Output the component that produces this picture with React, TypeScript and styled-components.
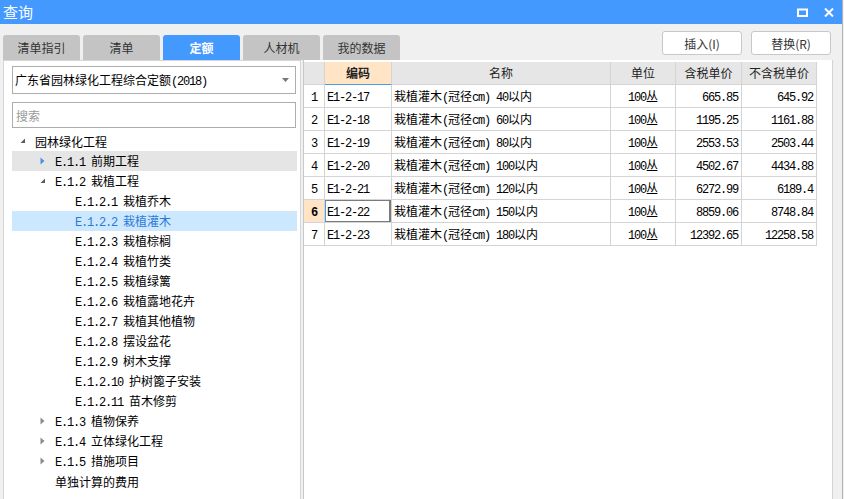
import React from "react";
import styled, { createGlobalStyle } from "styled-components";

const Global = createGlobalStyle`
  html, body { margin: 0; padding: 0; background: #f0f0f0; overflow: hidden; }
  body { font-family: "Noto Sans CJK SC", "Noto Sans", sans-serif; font-size: 12px; color: #000; }
  * { box-sizing: border-box; }
`;

const Window = styled.div`
  width: 843px;
  height: 499px;
  display: flex;
  flex-direction: column;
  background: #f0f0f0;
  border-right: 1px solid #b4b4b4;
`;

const TitleBar = styled.div`
  height: 24px;
  flex: none;
  background: #4499ff;
  display: flex;
  align-items: center;
  justify-content: space-between;
  padding: 0 8px 0 3px;
  color: #fff;
`;

const Title = styled.div`
  font-size: 15px;
  line-height: 24px;
`;

const TitleIcons = styled.div`
  display: flex;
  align-items: center;
  gap: 16px;
  height: 24px;
`;

const Toolbar = styled.div`
  height: 36px;
  flex: none;
  display: flex;
  justify-content: space-between;
  padding: 0 11px 0 3px;
`;

const Tabs = styled.div`
  display: flex;
  gap: 3px;
  align-self: flex-end;
`;

const Tab = styled.div<{ $active?: boolean }>`
  width: 77px;
  height: 25px;
  border-radius: 3px 3px 0 0;
  background: ${(p) => (p.$active ? "#4499ff" : "#c4c4c4")};
  color: ${(p) => (p.$active ? "#fff" : "#333")};
  font-weight: ${(p) => (p.$active ? 700 : 400)};
  display: flex;
  align-items: center;
  justify-content: center;
  font-size: 12px;
`;

const Buttons = styled.div`
  display: flex;
  gap: 9px;
  margin-top: 7px;
`;

const Button = styled.div`
  width: 80px;
  height: 24px;
  background: #fff;
  border: 1px solid #c8c8c8;
  border-radius: 3px;
  display: flex;
  align-items: center;
  justify-content: center;
  color: #333;
  font-size: 12px;
`;

const Content = styled.div`
  flex: 1;
  min-height: 0;
  display: flex;
  gap: 2px;
  padding: 0 9px 0 3px;
`;

const LeftPanel = styled.div`
  width: 298px;
  flex: none;
  background: #fff;
  border: 1px solid #d6d6d6;
  border-bottom: none;
  padding: 5px 4px 0 8px;
  display: flex;
  flex-direction: column;
`;

const Select = styled.div`
  width: 284px;
  height: 28px;
  border: 1px solid #adadad;
  display: flex;
  align-items: center;
  justify-content: space-between;
  padding: 0 6px 0 2px;
  font-size: 12px;
`;

const Search = styled.input`
  width: 284px;
  height: 26px;
  margin-top: 8px;
  border: 1px solid #adadad;
  padding: 0 3px;
  outline: none;
  font-family: "Noto Sans CJK SC", sans-serif;
  font-size: 12px;
  &::placeholder { color: #9a9a9a; }
`;

const Tree = styled.div`
  margin-top: 3px;
  width: 285px;
  display: flex;
  flex-direction: column;
`;

const Row = styled.div<{ $state?: "hover" | "selected" }>`
  height: 20px;
  display: flex;
  align-items: center;
  background: ${(p) =>
    p.$state === "hover" ? "#e5e5e5" : p.$state === "selected" ? "#cce8ff" : "transparent"};
  color: ${(p) => (p.$state === "selected" ? "#2a78d8" : "#000")};
  font-size: 12px;
  white-space: nowrap;
`;

const ArrowBox = styled.span<{ $level: number }>`
  width: 15px;
  flex: none;
  margin-left: ${(p) => 8 + p.$level * 20}px;
  display: flex;
  align-items: center;
`;

const Latin = styled.span`
  font-family: "Liberation Mono", monospace;
  letter-spacing: -1.2px;
`;

const RightPanel = styled.div`
  flex: 1;
  background: #fff;
  border-left: 1px solid #c8c8c8;
  border-right: 1px solid #d4d4d4;
  padding-top: 2px;
`;

const Grid = styled.div`
  display: grid;
  grid-template-columns: 21px 67px 219px 65px 66px 75px;
  width: 513px;
`;

const Cell = styled.div<{
  $head?: boolean;
  $align?: "left" | "center" | "right";
  $hl?: boolean;
  $focus?: boolean;
  $blueBottom?: boolean;
}>`
  position: relative;
  height: 23px;
  line-height: 22px;
  border-right: 1px solid #d4d4d4;
  border-bottom: 1px solid ${(p) => (p.$blueBottom ? "#4a9be8" : "#d4d4d4")};
  background: ${(p) => (p.$hl ? "#ffe4c6" : p.$head ? "#e6e6e6" : "#fff")};
  text-align: ${(p) => p.$align || "left"};
  padding: ${(p) => (p.$align === "right" ? "0 3px 0 0" : p.$align === "center" ? "0" : "0 0 0 2px")};
  font-weight: ${(p) => (p.$hl ? 700 : 400)};
  color: ${(p) => (p.$head ? "#222" : "#000")};
  white-space: nowrap;
  overflow: hidden;
  ${(p) =>
    p.$focus
      ? `&::after { content: ""; position: absolute; top: -1px; left: -1px; right: 0; bottom: -1px; border: 2px solid #7b7b7b; border-left-color: #4a9be8; }`
      : ""}
`;

function Mixed({ text }: { text: string }) {
  const parts = text.split(/([\x20-\x7e]+)/).filter((s) => s.length > 0);
  return (
    <>
      {parts.map((p, i) => (/^[\x20-\x7e]+$/.test(p) ? <Latin key={i}>{p}</Latin> : <span key={i}>{p}</span>))}
    </>
  );
}

const Expanded = () => (
  <svg width="6" height="6" viewBox="0 0 6 6">
    <path d="M5 0.5 L5 5 L0.5 5 Z" fill="#5a5a5a" />
  </svg>
);

const Collapsed = ({ color }: { color: string }) => (
  <svg width="5" height="8" viewBox="0 0 5 8">
    <path d="M0.5 0.5 L4.5 4 L0.5 7.5 Z" fill={color} />
  </svg>
);

type Node = { level: number; text: string; kind: "exp" | "col" | "none"; state?: "hover" | "selected" };

const nodes: Node[] = [
  { level: 0, text: "园林绿化工程", kind: "exp" },
  { level: 1, text: "E.1.1 前期工程", kind: "col", state: "hover" },
  { level: 1, text: "E.1.2 栽植工程", kind: "exp" },
  { level: 2, text: "E.1.2.1 栽植乔木", kind: "none" },
  { level: 2, text: "E.1.2.2 栽植灌木", kind: "none", state: "selected" },
  { level: 2, text: "E.1.2.3 栽植棕榈", kind: "none" },
  { level: 2, text: "E.1.2.4 栽植竹类", kind: "none" },
  { level: 2, text: "E.1.2.5 栽植绿篱", kind: "none" },
  { level: 2, text: "E.1.2.6 栽植露地花卉", kind: "none" },
  { level: 2, text: "E.1.2.7 栽植其他植物", kind: "none" },
  { level: 2, text: "E.1.2.8 摆设盆花", kind: "none" },
  { level: 2, text: "E.1.2.9 树木支撑", kind: "none" },
  { level: 2, text: "E.1.2.10 护树篦子安装", kind: "none" },
  { level: 2, text: "E.1.2.11 苗木修剪", kind: "none" },
  { level: 1, text: "E.1.3 植物保养", kind: "col" },
  { level: 1, text: "E.1.4 立体绿化工程", kind: "col" },
  { level: 1, text: "E.1.5 措施项目", kind: "col" },
  { level: 1, text: "单独计算的费用", kind: "none" },
];

const rows = [
  ["E1-2-17", "40", "665.85", "645.92"],
  ["E1-2-18", "60", "1195.25", "1161.88"],
  ["E1-2-19", "80", "2553.53", "2503.44"],
  ["E1-2-20", "100", "4502.67", "4434.88"],
  ["E1-2-21", "120", "6272.99", "6189.4"],
  ["E1-2-22", "150", "8859.06", "8748.84"],
  ["E1-2-23", "180", "12392.65", "12258.58"],
];

export default function App() {
  return (
    <>
      <Global />
      <Window>
        <TitleBar>
          <Title>查询</Title>
          <TitleIcons>
            <svg width="11" height="9" viewBox="0 0 11 9">
              <rect x="1" y="1.5" width="9" height="6.5" fill="none" stroke="#fff" strokeWidth="2" />
            </svg>
            <svg width="10" height="9" viewBox="0 0 10 9">
              <path d="M1 0.5 L9 8.5 M9 0.5 L1 8.5" stroke="#fff" strokeWidth="2" />
            </svg>
          </TitleIcons>
        </TitleBar>
        <Toolbar>
          <Tabs>
            <Tab>清单指引</Tab>
            <Tab>清单</Tab>
            <Tab $active>定额</Tab>
            <Tab>人材机</Tab>
            <Tab>我的数据</Tab>
          </Tabs>
          <Buttons>
            <Button>插入(I)</Button>
            <Button>替换(R)</Button>
          </Buttons>
        </Toolbar>
        <Content>
          <LeftPanel>
            <Select>
              <span>
                <Mixed text="广东省园林绿化工程综合定额(2018)" />
              </span>
              <svg width="7" height="4" viewBox="0 0 7 4">
                <path d="M0 0 L7 0 L3.5 4 Z" fill="#777" />
              </svg>
            </Select>
            <Search placeholder="搜索" />
            <Tree>
              {nodes.map((n, i) => (
                <Row key={i} $state={n.state}>
                  <ArrowBox $level={n.level}>
                    {n.kind === "exp" && <Expanded />}
                    {n.kind === "col" && <Collapsed color={n.state === "hover" ? "#4a90e2" : "#8a8a8a"} />}
                  </ArrowBox>
                  <span>
                    <Mixed text={n.text} />
                  </span>
                </Row>
              ))}
            </Tree>
          </LeftPanel>
          <RightPanel>
            <Grid>
              <Cell $head />
              <Cell $head $hl $blueBottom $align="center">编码</Cell>
              <Cell $head $align="center">名称</Cell>
              <Cell $head $align="center">单位</Cell>
              <Cell $head $align="center">含税单价</Cell>
              <Cell $head $align="center">不含税单价</Cell>
              {rows.map((r, i) => (
                <React.Fragment key={i}>
                  <Cell $align="center" $hl={i === 5}>
                    <Latin>{i + 1}</Latin>
                  </Cell>
                  <Cell $focus={i === 5}>
                    <Mixed text={r[0]} />
                  </Cell>
                  <Cell>
                    <Mixed text={`栽植灌木(冠径cm) ${r[1]}以内`} />
                  </Cell>
                  <Cell $align="center">
                    <Mixed text="100丛" />
                  </Cell>
                  <Cell $align="right">
                    <Mixed text={r[2]} />
                  </Cell>
                  <Cell $align="right">
                    <Mixed text={r[3]} />
                  </Cell>
                </React.Fragment>
              ))}
            </Grid>
          </RightPanel>
        </Content>
      </Window>
    </>
  );
}
